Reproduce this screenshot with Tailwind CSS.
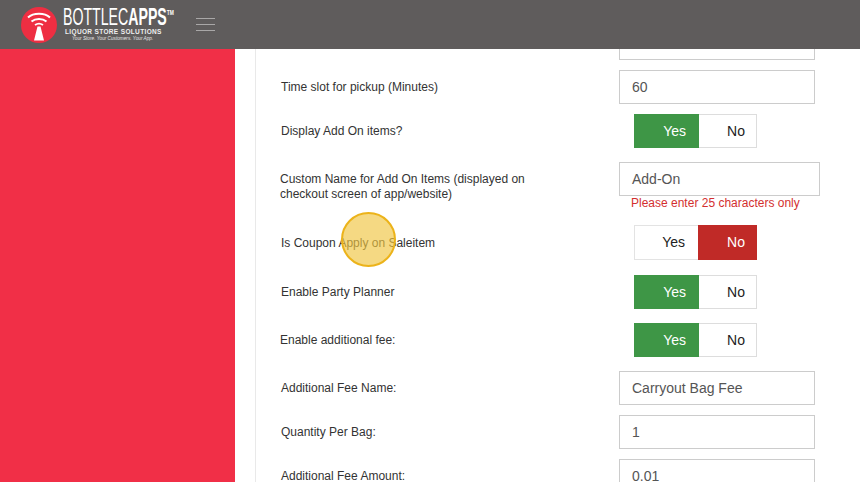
<!DOCTYPE html>
<html>
<head>
<meta charset="utf-8">
<script src="https://cdn.jsdelivr.net/npm/@tailwindcss/browser@4"></script>
</head>
<body class="w-[860px] h-[482px] overflow-hidden bg-white font-['Liberation_Sans',Arial,sans-serif]">
<div class="relative w-[860px] h-[482px] overflow-hidden flex flex-col">
  <header class="h-[49px] shrink-0 bg-[#5f5c5c] flex items-center">
    <div class="ml-[21px] w-[36px] h-[38px] shrink-0">
      <svg viewBox="0 0 36 38" class="w-[36px] h-[38px]">
        <circle cx="18" cy="19" r="18" fill="#ee2e42"/>
        <path d="M7 11.500 C12.500 6.500 23.500 6.500 29 11.500" fill="none" stroke="#fff" stroke-width="2"/>
        <path d="M10.500 15.500 C14.500 12 21.500 12 25.500 15.500" fill="none" stroke="#fff" stroke-width="2"/>
        <path d="M14 19 C16.500 17.300 19.500 17.300 22 19" fill="none" stroke="#fff" stroke-width="1.800"/>
        <path d="M16.500 20.500 H19.500 L23 34.500 H13 Z" fill="#fff"/>
      </svg>
    </div>
    <div class="ml-[6px] w-[110px] h-[34px] flex flex-col text-white">
      <div class="h-[19px] w-[160px] origin-top-left scale-x-[0.615] flex items-start leading-[19px] text-[23px] whitespace-nowrap">BOTTLEC<b>APPS</b><span class="text-[8px] leading-[9px] font-bold">TM</span></div>
      <div class="mt-[1px] ml-[2px] text-[6.500px] leading-[7px] font-bold tracking-[0.35px] text-[#eeeeee] whitespace-nowrap">LIQUOR STORE SOLUTIONS</div>
      <div class="mt-[1px] ml-[9px] text-[4.700px] leading-[6px] italic text-[#e5e5e5] whitespace-nowrap">Your Store. Your Customers. Your App.</div>
    </div>
    <div class="ml-[23px] w-[19px] h-[13px] flex flex-col justify-between">
      <div class="h-px bg-[#a9a7a7]"></div>
      <div class="h-px bg-[#a9a7a7]"></div>
      <div class="h-px bg-[#a9a7a7]"></div>
    </div>
  </header>
  <div class="flex flex-1 min-h-0">
    <aside class="w-[235px] shrink-0 bg-[#f12f47]"></aside>
    <main class="flex-1 min-w-0 pl-[20px] overflow-hidden">
      <div class="h-full border-l border-[#e9e9e9] pl-[24px] text-[12px] text-[#333333]">
        <div class="flex h-[11px] items-end">
          <div class="w-[339px]"></div>
          <div class="w-[196px] h-[25px] shrink-0 border border-[#cccccc] bg-white"></div>
        </div>
        <div class="mt-[10px] flex h-[34px] items-center">
          <div class="w-[339px] pl-px">Time slot for pickup (Minutes)</div>
          <div class="w-[196px] h-[34px] border border-[#cccccc] px-[12px] flex items-center text-[14px] text-[#555555]">60</div>
        </div>
        <div class="mt-[10px] flex h-[34px] items-center">
          <div class="w-[354px] pl-px">Display Add On items?</div>
          <div class="flex w-[123px] h-[34px] text-[14px]">
            <div class="w-[65px] bg-[#3e9646] text-white flex items-center justify-end pr-[13px]">Yes</div>
            <div class="w-[58px] border border-l-0 border-[#dddddd] text-[#222222] flex items-center justify-end pr-[11px]">No</div>
          </div>
        </div>
        <div class="mt-[14px] flex h-[34px] items-center">
          <div class="w-[339px] leading-[15px] pt-[16px] h-[46px]"><div class="w-[260px]">Custom Name for Add On Items (displayed on checkout screen of app/website)</div></div>
          <div class="w-[201px] h-[34px] border border-[#cccccc] px-[12px] pt-[1px] flex items-center text-[14px] text-[#555555]">Add-On</div>
        </div>
        <div class="h-[29px] pl-[351px] pb-[15px] flex items-center text-[#d32f2f]">Please enter 25 characters only</div>
        <div class="flex h-[35px] items-center">
          <div class="w-[354px] pl-px">Is Coupon Apply on Saleitem</div>
          <div class="flex w-[123px] h-[35px] text-[14px]">
            <div class="w-[64px] border border-r-0 border-[#e3e3e3] text-[#222222] flex items-center justify-end pr-[13px]">Yes</div>
            <div class="w-[59px] bg-[#c02a27] text-white flex items-center justify-end pr-[12px]">No</div>
          </div>
        </div>
        <div class="mt-[15px] flex h-[34px] items-center">
          <div class="w-[354px] pl-px">Enable Party Planner</div>
          <div class="flex w-[123px] h-[34px] text-[14px]">
            <div class="w-[65px] bg-[#3e9646] text-white flex items-center justify-end pr-[13px]">Yes</div>
            <div class="w-[58px] border border-l-0 border-[#dddddd] text-[#222222] flex items-center justify-end pr-[11px]">No</div>
          </div>
        </div>
        <div class="mt-[14px] flex h-[34px] items-center">
          <div class="w-[354px]">Enable additional fee:</div>
          <div class="flex w-[123px] h-[34px] text-[14px]">
            <div class="w-[65px] bg-[#3e9646] text-white flex items-center justify-end pr-[13px]">Yes</div>
            <div class="w-[58px] border border-l-0 border-[#dddddd] text-[#222222] flex items-center justify-end pr-[11px]">No</div>
          </div>
        </div>
        <div class="mt-[14px] flex h-[34px] items-center">
          <div class="w-[339px] pl-px">Additional Fee Name:</div>
          <div class="w-[196px] h-[34px] border border-[#cccccc] px-[12px] flex items-center text-[14px] text-[#555555]">Carryout Bag Fee</div>
        </div>
        <div class="mt-[10px] flex h-[34px] items-center">
          <div class="w-[339px] pl-px">Quantity Per Bag:</div>
          <div class="w-[196px] h-[34px] border border-[#cccccc] px-[12px] flex items-center text-[14px] text-[#555555]">1</div>
        </div>
        <div class="mt-[10px] flex h-[34px] items-center">
          <div class="w-[339px] pl-px">Additional Fee Amount:</div>
          <div class="w-[196px] h-[34px] border border-[#cccccc] px-[12px] flex items-center text-[14px] text-[#555555]">0.01</div>
        </div>
      </div>
    </main>
  </div>
  <div class="absolute left-[341px] top-[212px] w-[55px] h-[55px] rounded-full border-[2.500px] border-[#ecb31a] bg-[#efc441]/65"></div>
</div>
</body>
</html>
